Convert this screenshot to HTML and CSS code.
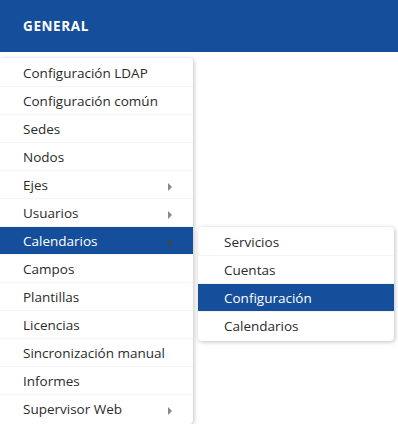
FILE: index.html
```html
<!DOCTYPE html>
<html lang="es">
<head>
    <meta charset="UTF-8">
    <title>General</title>
    <link rel="stylesheet" href="styles.css">
</head>
<body>
    <header class="top-bar">
        <span class="top-title">GENERAL</span>
    </header>

    <ul class="menu">
        <li class="menu-item">Configuración LDAP</li>
        <li class="menu-item">Configuración común</li>
        <li class="menu-item">Sedes</li>
        <li class="menu-item">Nodos</li>
        <li class="menu-item has-sub">Ejes</li>
        <li class="menu-item has-sub">Usuarios</li>
        <li class="menu-item has-sub active">Calendarios
            <ul class="submenu">
                <li class="menu-item">Servicios</li>
                <li class="menu-item">Cuentas</li>
                <li class="menu-item active">Configuración</li>
                <li class="menu-item">Calendarios</li>
            </ul>
        </li>
        <li class="menu-item">Campos</li>
        <li class="menu-item">Plantillas</li>
        <li class="menu-item">Licencias</li>
        <li class="menu-item">Sincronización manual</li>
        <li class="menu-item">Informes</li>
        <li class="menu-item has-sub">Supervisor Web</li>
    </ul>
</body>
</html>
```

FILE: styles.css
```css
* {
    margin: 0;
    padding: 0;
    box-sizing: border-box;
}

body {
    font-family: 'Open Sans', 'Noto Sans', sans-serif;
    color: #333;
    background-color: #fff;
}

.top-bar {
    height: 52px;
    background-color: #154f9b;
    display: flex;
    align-items: center;
    padding-left: 23px;
}

.top-title {
    color: #fff;
    font-weight: bold;
    font-size: 13.5px;
    letter-spacing: 0.6px;
}

.menu {
    list-style: none;
    width: 193px;
    margin-top: 6px;
    padding: 1px 0;
    background-color: #fff;
    border-radius: 0 4px 4px 0;
    box-shadow: 1px 1px 4px rgba(0, 0, 0, 0.25);
}

.menu-item {
    position: relative;
    height: 28px;
    line-height: 28px;
    padding-left: 23px;
    font-size: 13.5px;
    color: #2b2b2b;
    border-bottom: 1px solid #f4f4f4;
}

.menu-item:last-child {
    border-bottom: none;
}

.menu-item.active {
    background-color: #154f9b;
    color: #fff;
}

.has-sub::after {
    content: '';
    position: absolute;
    right: 21px;
    top: 12px;
    border-left: 4px solid #888;
    border-top: 4px solid transparent;
    border-bottom: 4px solid transparent;
}

.has-sub.active::after {
    border-left-color: #444;
}

.submenu {
    list-style: none;
    position: absolute;
    left: 198px;
    top: 0;
    width: 196px;
    padding: 1px 0;
    background-color: #fff;
    border-radius: 4px;
    box-shadow: 1px 1px 4px rgba(0, 0, 0, 0.25);
}

.submenu .menu-item {
    padding-left: 26px;
}
```
